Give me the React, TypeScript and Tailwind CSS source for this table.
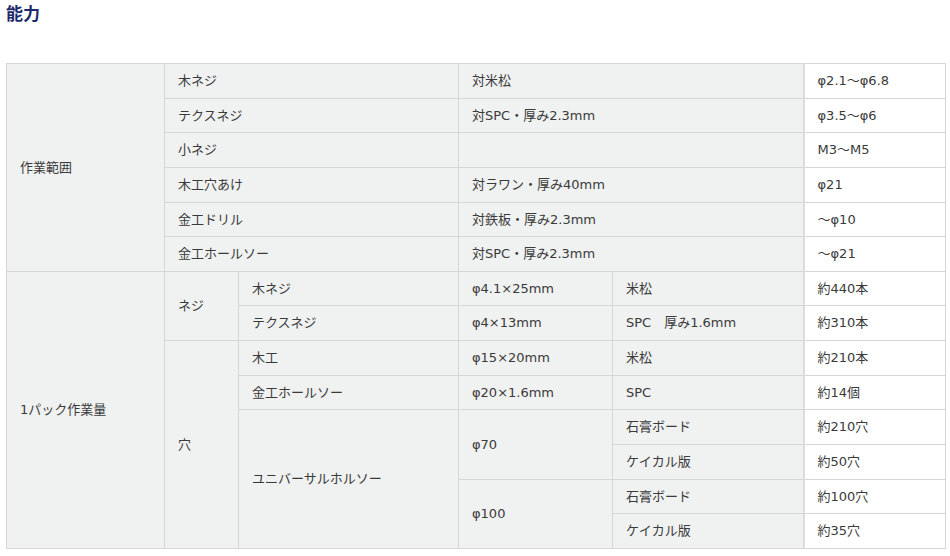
/**
 * App.tsx
 * Spec sheet block: "能力" heading with a capacity table (rowspan layout).
 */

const FONT = '"DejaVu Sans", "Noto Sans CJK JP", sans-serif';

const cell = 'border border-[#d6d6d6] bg-[#f0f1f1] pl-[13px] pr-2 align-middle font-normal text-left';
const valueCell = 'border border-[#d6d6d6] border-l-2 border-l-[#dcdcdc] bg-white pl-[13px] pr-2 align-middle';

const ROW_H = ['h-[35px]', 'h-[34px]'];

export default function App() {
  return (
    <div className="w-[950px] h-[556px] bg-white text-[13px] text-[#3a3a3a]" style={{ fontFamily: FONT }}>
      {/* ── Heading ─────────────────────────────────────────────────── */}
      <h2
        className="pl-[6px] pt-[1px] text-[17px] leading-[24px] font-bold text-[#1b2a6b]"
        style={{ fontFamily: '"Noto Sans CJK JP", sans-serif' }}
      >
        能力
      </h2>

      {/* ── Capacity table ──────────────────────────────────────────── */}
      <div className="pl-[6px] pt-[38px]">
        <table className="table-fixed border-collapse w-[939px]">
          <colgroup>
            <col className="w-[158px]" />
            <col className="w-[74px]" />
            <col className="w-[220px]" />
            <col className="w-[154px]" />
            <col className="w-[191px]" />
            <col className="w-[142px]" />
          </colgroup>
          <tbody>
            {/* 作業範囲 */}
            <tr className={ROW_H[0]}>
              <th rowSpan={6} className={cell}>作業範囲</th>
              <td colSpan={2} className={cell}>木ネジ</td>
              <td colSpan={2} className={cell}>対米松</td>
              <td className={valueCell}>φ2.1〜φ6.8</td>
            </tr>
            <tr className={ROW_H[1]}>
              <td colSpan={2} className={cell}>テクスネジ</td>
              <td colSpan={2} className={cell}>対SPC・厚み2.3mm</td>
              <td className={valueCell}>φ3.5〜φ6</td>
            </tr>
            <tr className={ROW_H[0]}>
              <td colSpan={2} className={cell}>小ネジ</td>
              <td colSpan={2} className={cell}></td>
              <td className={valueCell}>M3〜M5</td>
            </tr>
            <tr className={ROW_H[0]}>
              <td colSpan={2} className={cell}>木工穴あけ</td>
              <td colSpan={2} className={cell}>対ラワン・厚み40mm</td>
              <td className={valueCell}>φ21</td>
            </tr>
            <tr className={ROW_H[1]}>
              <td colSpan={2} className={cell}>金工ドリル</td>
              <td colSpan={2} className={cell}>対鉄板・厚み2.3mm</td>
              <td className={valueCell}>〜φ10</td>
            </tr>
            <tr className={ROW_H[0]}>
              <td colSpan={2} className={cell}>金工ホールソー</td>
              <td colSpan={2} className={cell}>対SPC・厚み2.3mm</td>
              <td className={valueCell}>〜φ21</td>
            </tr>

            {/* 1パック作業量 */}
            <tr className={ROW_H[1]}>
              <th rowSpan={8} className={cell}>1パック作業量</th>
              <td rowSpan={2} className={cell}>ネジ</td>
              <td className={cell}>木ネジ</td>
              <td className={cell}>φ4.1×25mm</td>
              <td className={cell}>米松</td>
              <td className={valueCell}>約440本</td>
            </tr>
            <tr className={ROW_H[0]}>
              <td className={cell}>テクスネジ</td>
              <td className={cell}>φ4×13mm</td>
              <td className={cell}>SPC　厚み1.6mm</td>
              <td className={valueCell}>約310本</td>
            </tr>
            <tr className={ROW_H[0]}>
              <td rowSpan={6} className={cell}>穴</td>
              <td className={cell}>木工</td>
              <td className={cell}>φ15×20mm</td>
              <td className={cell}>米松</td>
              <td className={valueCell}>約210本</td>
            </tr>
            <tr className={ROW_H[1]}>
              <td className={cell}>金工ホールソー</td>
              <td className={cell}>φ20×1.6mm</td>
              <td className={cell}>SPC</td>
              <td className={valueCell}>約14個</td>
            </tr>
            <tr className={ROW_H[0]}>
              <td rowSpan={4} className={cell}>ユニバーサルホルソー</td>
              <td rowSpan={2} className={cell}>φ70</td>
              <td className={cell}>石膏ボード</td>
              <td className={valueCell}>約210穴</td>
            </tr>
            <tr className={ROW_H[0]}>
              <td className={cell}>ケイカル版</td>
              <td className={valueCell}>約50穴</td>
            </tr>
            <tr className={ROW_H[1]}>
              <td rowSpan={2} className={cell}>φ100</td>
              <td className={cell}>石膏ボード</td>
              <td className={valueCell}>約100穴</td>
            </tr>
            <tr className={ROW_H[0]}>
              <td className={cell}>ケイカル版</td>
              <td className={valueCell}>約35穴</td>
            </tr>
          </tbody>
        </table>
      </div>
    </div>
  );
}
